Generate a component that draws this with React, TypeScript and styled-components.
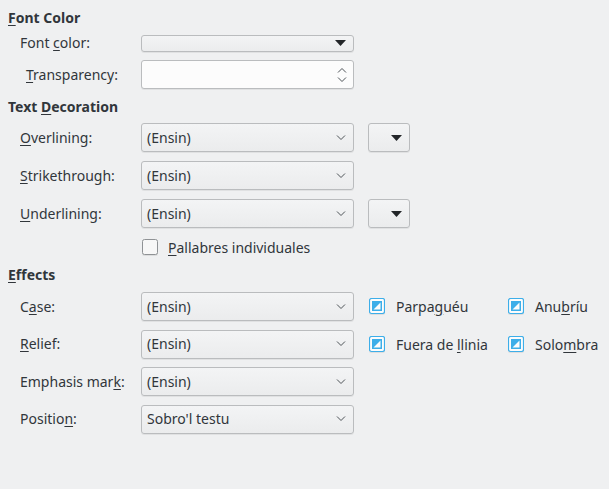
import React from 'react'
import { styled, createGlobalStyle } from 'styled-components'

const GlobalStyle = createGlobalStyle`
  html, body {
    margin: 0;
    padding: 0;
    background: #eff0f1;
  }
  * {
    box-sizing: border-box;
    font-family: 'Noto Sans', 'DejaVu Sans', sans-serif;
  }
`

const Page = styled.div`
  width: 609px;
  height: 489px;
  background: #eff0f1;
  color: #31363b;
  font-size: 14px;
  padding: 8px 0 0 8px;
`

const Heading = styled.div<{ $top?: number }>`
  height: 20px;
  line-height: 20px;
  font-weight: bold;
  margin-top: ${(p) => p.$top ?? 0}px;
`

const Rows = styled.div<{ $top: number; $gap?: number }>`
  display: grid;
  grid-template-columns: 107px 213px auto;
  column-gap: 14px;
  row-gap: ${(p) => p.$gap ?? 9}px;
  padding-left: 12px;
  margin-top: ${(p) => p.$top}px;
  align-items: center;
`

const Label = styled.div<{ $indent?: number }>`
  padding-left: ${(p) => p.$indent ?? 0}px;
  white-space: nowrap;
  line-height: 18px;
`

const U = styled.span`
  text-decoration: underline;
  text-underline-offset: 2px;
`

const Combo = styled.div<{ $h?: number }>`
  height: ${(p) => p.$h ?? 29}px;
  border: 1px solid #babcbe;
  border-radius: 3px;
  background: linear-gradient(#f3f4f5, #ebeced);
  box-shadow: 0 1px 0 rgba(0, 0, 0, 0.06);
  display: flex;
  align-items: center;
  justify-content: space-between;
  padding: 0 7px 0 5px;
  line-height: 18px;
`

const SpinBox = styled(Combo)`
  background: #fcfcfc;
  padding-right: 6px;
`

const ColorButton = styled(Combo)`
  width: 42px;
  justify-content: flex-end;
  padding-right: 7px;
`

const Spacer = styled.div``

const CheckRow = styled.div`
  grid-column: 2 / 4;
  display: flex;
  align-items: center;
  height: 20px;
  gap: 10px;
  padding-left: 1px;
`

const Extras = styled.div`
  display: grid;
  grid-template-columns: 139px auto;
  padding-left: 1px;
`

const CheckItem = styled.div`
  display: flex;
  align-items: center;
  gap: 11px;
  white-space: nowrap;
`

const Chevron = ({ up }: { up?: boolean }) => (
  <svg width="10" height="6" viewBox="0 0 10 6">
    <path
      d={up ? 'M1 5.5 L5 1.5 L9 5.5' : 'M1 0.5 L5 4.5 L9 0.5'}
      fill="none"
      stroke="#4d5257"
      strokeWidth="1"
    />
  </svg>
)

const Triangle = () => (
  <svg width="11" height="6" viewBox="0 0 11 6">
    <polygon points="0,0 11,0 5.5,6" fill="#232629" />
  </svg>
)

const SpinArrows = styled.div`
  display: flex;
  flex-direction: column;
  gap: 4px;
`

const Box = ({ checked }: { checked?: boolean }) => (
  <svg width="16" height="17" viewBox="0 0 16 17">
    <rect x="0" y="1" width="16" height="16" rx="2" fill="rgba(0,0,0,0.08)" />
    <rect
      x="0.5"
      y="0.5"
      width="15"
      height="15"
      rx="2"
      fill={checked ? '#fcfcfc' : '#f7f7f7'}
      stroke={checked ? '#3daee9' : '#8f9295'}
      strokeWidth={checked ? 1.2 : 1}
    />
    {checked && (
      <>
        <rect x="3" y="3" width="10" height="10" fill="#3daee9" />
        <polygon points="11.5,4.5 11.5,11.5 4.5,11.5" fill="#fcfcfc" />
      </>
    )}
  </svg>
)

const Select = ({ value }: { value: string }) => (
  <Combo>
    <span>{value}</span>
    <Chevron />
  </Combo>
)

export default function App() {
  return (
    <Page>
      <GlobalStyle />
      <Heading>
        <U>F</U>ont Color
      </Heading>
      <Rows $top={6} $gap={8}>
        <Label>
          Font <U>c</U>olor:
        </Label>
        <Combo $h={17}>
          <span />
          <Triangle />
        </Combo>
        <Spacer />
        <Label $indent={6}>
          <U>T</U>ransparency:
        </Label>
        <SpinBox>
          <span />
          <SpinArrows>
            <Chevron up />
            <Chevron />
          </SpinArrows>
        </SpinBox>
        <Spacer />
      </Rows>

      <Heading $top={8}>
        Text <U>D</U>ecoration
      </Heading>
      <Rows $top={6}>
        <Label>
          <U>O</U>verlining:
        </Label>
        <Select value="(Ensin)" />
        <ColorButton>
          <Triangle />
        </ColorButton>
        <Label>
          <U>S</U>trikethrough:
        </Label>
        <Select value="(Ensin)" />
        <Spacer />
        <Label>
          <U>U</U>nderlining:
        </Label>
        <Select value="(Ensin)" />
        <ColorButton>
          <Triangle />
        </ColorButton>
        <Spacer />
        <CheckRow>
          <Box />
          <span>
            <U>P</U>allabres individuales
          </span>
        </CheckRow>
      </Rows>

      <Heading $top={8}>
        <U>E</U>ffects
      </Heading>
      <Rows $top={7} $gap={8.5}>
        <Label>
          C<U>a</U>se:
        </Label>
        <Select value="(Ensin)" />
        <Extras>
          <CheckItem>
            <Box checked />
            <span>
              Parpa<U>g</U>uéu
            </span>
          </CheckItem>
          <CheckItem>
            <Box checked />
            <span>
              Anu<U>b</U>ríu
            </span>
          </CheckItem>
        </Extras>
        <Label>
          <U>R</U>elief:
        </Label>
        <Select value="(Ensin)" />
        <Extras>
          <CheckItem>
            <Box checked />
            <span>
              Fuera de <U>l</U>linia
            </span>
          </CheckItem>
          <CheckItem>
            <Box checked />
            <span>
              Solo<U>m</U>bra
            </span>
          </CheckItem>
        </Extras>
        <Label>
          Emphasis mar<U>k</U>:
        </Label>
        <Select value="(Ensin)" />
        <Spacer />
        <Label>
          Positio<U>n</U>:
        </Label>
        <Select value="Sobro'l testu" />
        <Spacer />
      </Rows>
    </Page>
  )
}
